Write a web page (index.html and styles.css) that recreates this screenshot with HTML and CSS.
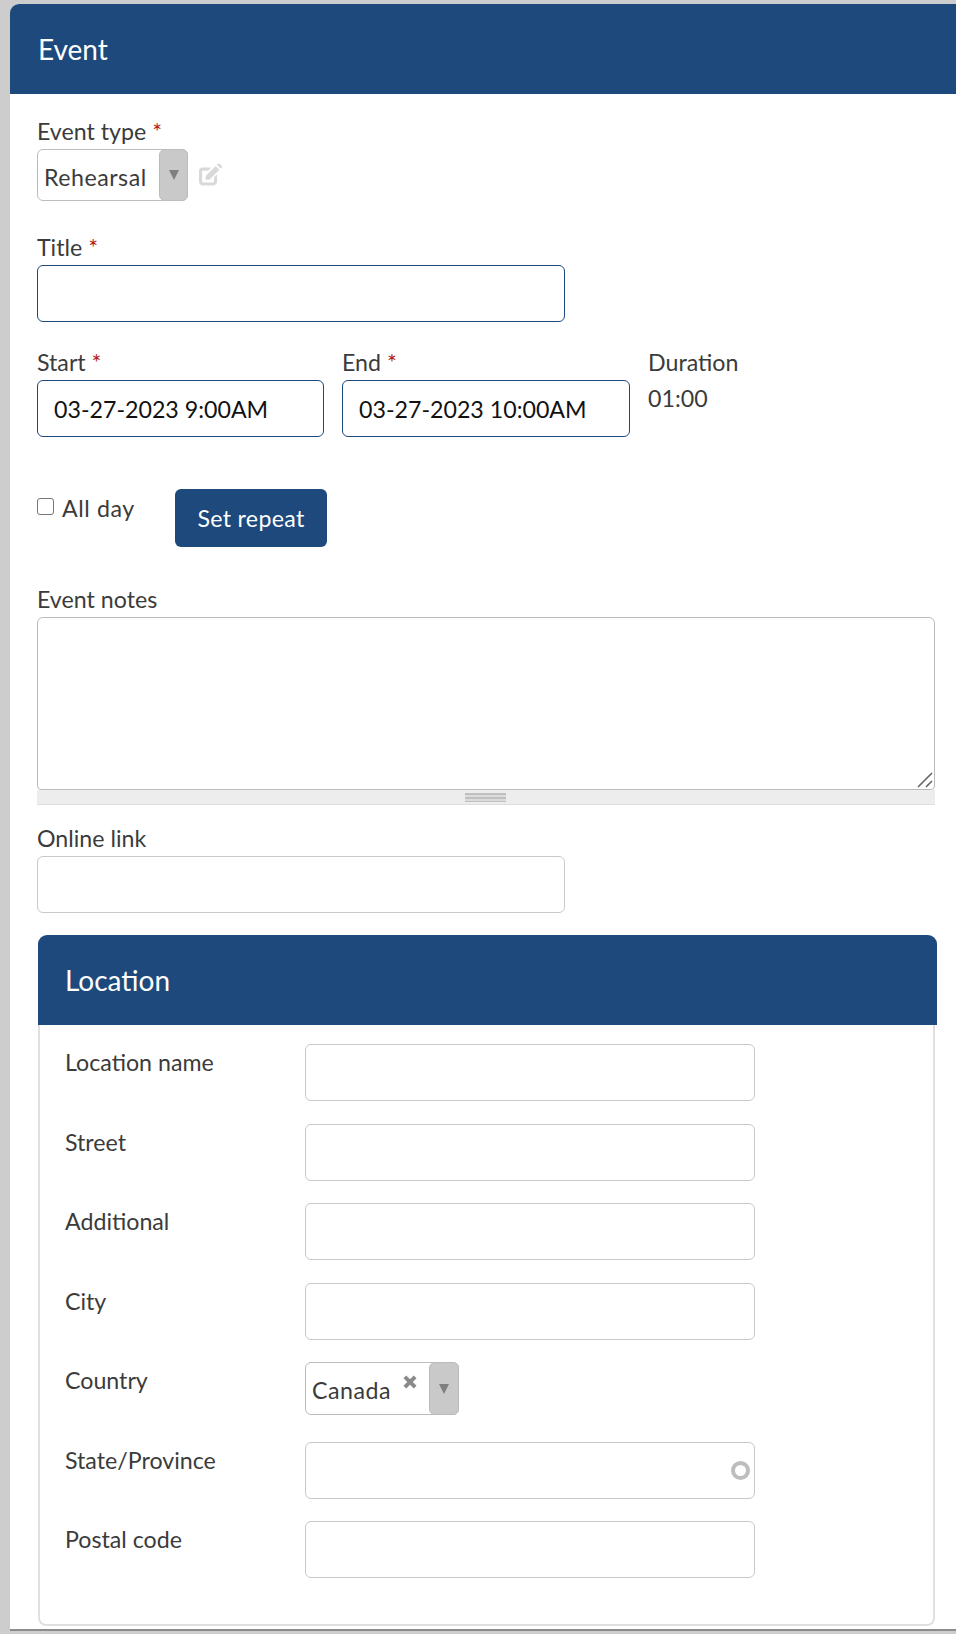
FILE: index.html
```html
<!DOCTYPE html>
<html lang="en">
<head>
<meta charset="utf-8">
<title>Event</title>
<link rel="stylesheet" href="styles.css">
</head>
<body>
<main class="card">
  <header class="head"><h1>Event</h1></header>
  <form class="body">
    <div class="field f-type">
      <label class="lbl">Event type <span class="req">*</span></label>
      <div class="type-row">
        <div class="select s-type"><span class="val">Rehearsal</span><span class="arrow a-type"><i class="tri"></i></span></div>
        <svg class="edit" viewBox="2 1.500 22.500 21.500" width="23" height="23"><path d="M5 5.500h9l-3 3H6c-.5 0-1 .4-1 .9v9.700c0 .5.5.9 1 .9h9.800c.5 0 .9-.4.9-.9v-4.100l3-3v7.200c0 2-1.600 3.700-3.600 3.700H5.600C3.600 22.900 2 21.300 2 19.300V9.100C2 7.100 3.300 5.500 5 5.500z" fill="#d9d9d9"/><path d="M8.500 13.700 18.300 3.900l3.700 3.700-9.800 9.800H8.500z" fill="#d9d9d9"/><path d="M19.500 2.700l.9-.9c.5-.5 1.300-.5 1.800 0l2 2c.5.5.5 1.300 0 1.800l-.9.9z" fill="#d9d9d9"/></svg>
      </div>
    </div>
    <div class="field f-title">
      <label class="lbl">Title <span class="req">*</span></label>
      <div class="input active w-wide"></div>
    </div>
    <div class="dates">
      <div class="date">
        <label class="lbl">Start <span class="req">*</span></label>
        <div class="input active date-in s-start">03-27-2023 9:00AM</div>
      </div>
      <div class="date">
        <label class="lbl">End <span class="req">*</span></label>
        <div class="input active date-in s-end">03-27-2023 10:00AM</div>
      </div>
      <div class="dur">
        <div class="lbl">Duration</div>
        <div class="dur-val">01:00</div>
      </div>
    </div>
    <div class="opts">
      <label class="allday"><span class="check"></span>All day</label>
      <button type="button" class="btn">Set repeat</button>
    </div>
    <div class="field f-notes">
      <label class="lbl">Event notes</label>
      <div class="notes">
        <svg class="grip" viewBox="0 0 16 16" width="16" height="16"><path d="M1 15 15 1M9 15l6-6" stroke="#666" stroke-width="1.600" fill="none"/></svg>
      </div>
      <div class="resize"><span class="bars"></span></div>
    </div>
    <div class="field f-online">
      <label class="lbl">Online link</label>
      <div class="input w-wide"></div>
    </div>
    <section class="loc">
      <header class="loc-head"><h2>Location</h2></header>
      <div class="loc-body">
        <div class="row"><label class="lbl">Location name</label><div class="input w-loc"></div></div>
        <div class="row"><label class="lbl">Street</label><div class="input w-loc"></div></div>
        <div class="row"><label class="lbl">Additional</label><div class="input w-loc"></div></div>
        <div class="row"><label class="lbl">City</label><div class="input w-loc"></div></div>
        <div class="row row-country"><label class="lbl">Country</label>
          <div class="select s-country"><span class="val">Canada</span>
            <svg class="clear" viewBox="0 0 14 14" width="16" height="16"><path d="M2.500 2.500l9 9M11.500 2.500l-9 9" stroke="#8a8a8a" stroke-width="3.400" fill="none"/></svg>
            <span class="arrow a-country"><i class="tri"></i></span></div>
        </div>
        <div class="row"><label class="lbl">State/Province</label><div class="input w-loc spin-in"><span class="spin"></span></div></div>
        <div class="row"><label class="lbl">Postal code</label><div class="input w-loc"></div></div>
      </div>
    </section>
  </form>
</main>
</body>
</html>
```
FILE: styles.css
```css
* { box-sizing: border-box; }
html, body { margin: 0; height: 100%; }
body {
  background: #cdcdcd;
  padding: 4px 0 0 10px;
  font-family: "Lato", "Noto Sans", sans-serif;
  font-size: 23.200px;
  color: #3b3b3b;
  overflow: hidden;
}
.card {
  background: #fff;
  height: 1627px;
  border-top-left-radius: 9px;
  overflow: hidden;
  border-bottom: 2px solid #8c8c8c;
}
.head {
  background: #1d497c;
  height: 90px;
  display: flex;
  align-items: center;
  padding-left: 28px;
}
.head h1, .loc-head h2 {
  margin: 0;
  font-weight: 400;
  font-size: 28px;
  color: #fff;
}
.body { padding: 24px 21px 0 27px; }
.lbl { display: block; line-height: 26px; height: 26px; color: #3b3b3b; }
.req { color: #b3201a; }
.field { display: block; }
.f-type { height: 116px; }
.f-title { height: 115px; }
.type-row { display: flex; align-items: center; gap: 11px; margin-top: 5px; }
.select {
  display: flex;
  align-items: center;
  background: #fff;
  border: 1px solid #bcbcbc;
  border-radius: 6px;
}
.s-type { width: 151px; height: 52px; padding-left: 6px; }
.s-country { width: 154px; height: 53px; padding-left: 6px; position: relative; }
.s-type .val { padding-top: 4px; }
.s-country .val { padding-top: 2px; }
.val { flex: 1; white-space: nowrap; letter-spacing: .5px; }
.arrow {
  align-self: stretch;
  background: #c9c9c9;
  border-radius: 6px;
  display: flex;
  align-items: center;
  justify-content: center;
  border: 1px solid #bcbcbc;
  margin: -1px -1px -1px 0;
}
.a-type { width: 29px; }
.a-country { width: 30px; }
.tri {
  display: block;
  width: 0;
  height: 0;
  border-left: 5px solid transparent;
  border-right: 5px solid transparent;
  border-top: 10px solid #7f7f7f;
}
.edit { margin-top: -2px; }
.clear { position: absolute; top: 11px; right: 40px; }
.input {
  height: 57px;
  border: 1px solid #c9c9c9;
  border-radius: 6px;
  background: #fff;
}
.input.active { border-color: #1d497c; }
.w-wide { width: 528px; margin-top: 5px; }
.dates { display: flex; height: 140px; gap: 18px; }
.date-in {
  width: 287px;
  height: 57px;
  margin-top: 5px;
  color: #111;
  padding-left: 16px;
  display: flex;
  align-items: center;
}
.s-end { width: 288px; }
.dur-val { margin-top: 10px; line-height: 26px; }
.opts { display: flex; height: 108px; align-items: flex-start; }
.allday { display: flex; align-items: center; width: 138px; margin-top: 6px; line-height: 26px; letter-spacing: .6px; }
.check {
  width: 17px;
  height: 17px;
  border: 1.500px solid #767676;
  border-radius: 3px;
  margin-right: 8px;
  margin-top: -4px;
  background: #fff;
}
.btn {
  width: 152px;
  height: 58px;
  background: #1d497c;
  color: #fff;
  font: inherit;
  letter-spacing: .3px;
  border: 0;
  border-radius: 6px;
  padding: 0;
}
.f-notes { height: 238px; }
.f-notes .lbl { height: 23px; line-height: 22px; margin-top: -9px; margin-bottom: 6px; }
.notes {
  width: 898px;
  height: 173px;
  border: 1px solid #bcbcbc;
  border-radius: 6px 6px 4px 4px;
  background: #fff;
  position: relative;
}
.grip { position: absolute; right: 1px; bottom: 1px; }
.resize {
  width: 898px;
  height: 15px;
  background: #ededed;
  border-bottom: 1px solid #dedede;
  display: flex;
  align-items: center;
  justify-content: center;
  padding-right: 2px;
}
.bars {
  width: 41px;
  height: 9px;
  background: repeating-linear-gradient(#c0c0c0 0 2px, #dcdcdc 2px 4px);
}
.f-online { height: 110px; margin-top: -1px; }
.loc { width: 899px; margin-left: 1px; }
.loc-head {
  background: #1d497c;
  height: 90px;
  display: flex;
  align-items: center;
  padding-left: 27px;
  border-radius: 9px 9px 0 0;
}
.loc-body {
  width: 897px;
  height: 601px;
  border: 2px solid #e0e0e0;
  border-top: 0;
  border-radius: 0 0 8px 8px;
  padding: 19px 0 0 25px;
}
.row { display: flex; height: 79.500px; }
.row .lbl { width: 240px; margin-top: 5px; }
.w-loc { width: 450px; margin-top: 0; }
.spin-in { position: relative; }
.spin {
  position: absolute;
  right: 4px;
  top: 18px;
  width: 19px;
  height: 19px;
  border: 4px solid #bdbdbd;
  border-radius: 50%;
}
```
